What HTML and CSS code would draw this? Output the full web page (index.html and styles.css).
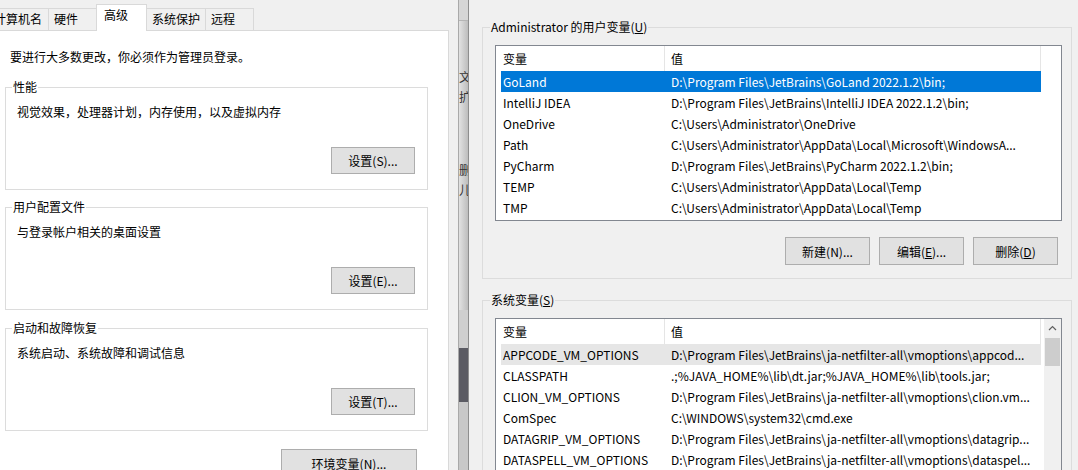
FILE: index.html
```html
<!DOCTYPE html>
<html lang="zh-CN">
<head>
    <meta charset="UTF-8">
    <title>系统属性 - 环境变量</title>
    <link rel="stylesheet" href="styles.css">
</head>
<body>
    <!-- 系统属性：高级 -->
    <div class="sysprop">
        <div class="tabs">
            <div class="tab first">计算机名</div>
            <div class="tab">硬件</div>
            <div class="tab active">高级</div>
            <div class="tab">系统保护</div>
            <div class="tab">远程</div>
        </div>
        <div class="panel">
            <p class="note">要进行大多数更改，你必须作为管理员登录。</p>

            <div class="group">
                <div class="group-title">性能</div>
                <p class="group-text">视觉效果，处理器计划，内存使用，以及虚拟内存</p>
                <button class="btn">设置(S)...</button>
            </div>

            <div class="group">
                <div class="group-title">用户配置文件</div>
                <p class="group-text">与登录帐户相关的桌面设置</p>
                <button class="btn">设置(E)...</button>
            </div>

            <div class="group last">
                <div class="group-title">启动和故障恢复</div>
                <p class="group-text">系统启动、系统故障和调试信息</p>
                <button class="btn">设置(T)...</button>
            </div>

            <button class="btn env-btn">环境变量(N)...</button>
        </div>
    </div>

    <!-- window behind -->
    <div class="strip">
        <div class="strip-top"></div>
        <div class="strip-mid">
            <span class="frag f1">文</span>
            <span class="frag f2">扩</span>
            <span class="frag f3">删</span>
            <span class="frag f2">儿</span>
        </div>
        <div class="strip-light"></div>
        <div class="strip-dark"></div>
        <div class="strip-low"></div>
    </div>

    <!-- 环境变量 -->
    <div class="envvars">
        <div class="group wide">
            <div class="group-title">Administrator 的用户变量(<u>U</u>)</div>
            <div class="list user-list">
                <div class="list-body">
                    <div class="list-head">
                        <div class="col-name">变量</div>
                        <div class="col-value">值</div>
                    </div>
                    <div class="row selected"><div class="col-name">GoLand</div><div class="col-value">D:\Program Files\JetBrains\GoLand 2022.1.2\bin;</div></div>
                    <div class="row"><div class="col-name">IntelliJ IDEA</div><div class="col-value">D:\Program Files\JetBrains\IntelliJ IDEA 2022.1.2\bin;</div></div>
                    <div class="row"><div class="col-name">OneDrive</div><div class="col-value">C:\Users\Administrator\OneDrive</div></div>
                    <div class="row"><div class="col-name">Path</div><div class="col-value">C:\Users\Administrator\AppData\Local\Microsoft\WindowsA...</div></div>
                    <div class="row"><div class="col-name">PyCharm</div><div class="col-value">D:\Program Files\JetBrains\PyCharm 2022.1.2\bin;</div></div>
                    <div class="row"><div class="col-name">TEMP</div><div class="col-value">C:\Users\Administrator\AppData\Local\Temp</div></div>
                    <div class="row"><div class="col-name">TMP</div><div class="col-value">C:\Users\Administrator\AppData\Local\Temp</div></div>
                </div>
            </div>
            <div class="btn-row">
                <button class="btn small">新建(N)...</button>
                <button class="btn small">编辑(<u>E</u>)...</button>
                <button class="btn small">删除(<u>D</u>)</button>
            </div>
        </div>

        <div class="group wide sys-group">
            <div class="group-title">系统变量(<u>S</u>)</div>
            <div class="list sys-list">
                <div class="list-body">
                    <div class="list-head">
                        <div class="col-name">变量</div>
                        <div class="col-value">值</div>
                    </div>
                    <div class="row hot"><div class="col-name">APPCODE_VM_OPTIONS</div><div class="col-value">D:\Program Files\JetBrains\ja-netfilter-all\vmoptions\appcod...</div></div>
                    <div class="row"><div class="col-name">CLASSPATH</div><div class="col-value">.;%JAVA_HOME%\lib\dt.jar;%JAVA_HOME%\lib\tools.jar;</div></div>
                    <div class="row"><div class="col-name">CLION_VM_OPTIONS</div><div class="col-value">D:\Program Files\JetBrains\ja-netfilter-all\vmoptions\clion.vm...</div></div>
                    <div class="row"><div class="col-name">ComSpec</div><div class="col-value">C:\WINDOWS\system32\cmd.exe</div></div>
                    <div class="row"><div class="col-name">DATAGRIP_VM_OPTIONS</div><div class="col-value">D:\Program Files\JetBrains\ja-netfilter-all\vmoptions\datagrip...</div></div>
                    <div class="row"><div class="col-name">DATASPELL_VM_OPTIONS</div><div class="col-value">D:\Program Files\JetBrains\ja-netfilter-all\vmoptions\dataspel...</div></div>
                </div>
                <div class="scrollbar">
                    <div class="sb-arrow">
                        <svg width="9" height="6" viewBox="0 0 9 6"><path d="M1 5 L4.5 1.5 L8 5" fill="none" stroke="#606060" stroke-width="1.2"/></svg>
                    </div>
                    <div class="sb-thumb"></div>
                </div>
            </div>
        </div>
    </div>
</body>
</html>
```

FILE: styles.css
```css
body {
    margin: 0;
    height: 470px;
    overflow: hidden;
    display: flex;
    background-color: #F0F0F0;
    font-family: "Noto Sans CJK SC", sans-serif;
    font-size: 12px;
    line-height: 16px;
    color: #000;
}
p {
    margin: 0;
}
u {
    text-decoration: underline;
    text-underline-offset: 1px;
}

/* left dialog */
.sysprop {
    width: 458px;
    height: 470px;
    flex: none;
    display: flex;
    flex-direction: column;
    overflow: hidden;
}
.tabs {
    height: 30px;
    flex: none;
    display: flex;
    align-items: flex-end;
}
.tab {
    height: 21px;
    line-height: 20px;
    padding: 0 5px;
    min-width: 37px;
    border: 1px solid #D9D9D9;
    border-bottom: none;
    margin-left: -1px;
    background-color: #F0F0F0;
    white-space: nowrap;
}
.tab.first {
    margin-left: -13px;
    padding: 0 6px;
}
.tab.active {
    position: relative;
    z-index: 1;
    height: 26px;
    line-height: 20px;
    padding: 0 7px;
    min-width: 35px;
    margin-bottom: -1px;
    background-color: #fff;
}
.panel {
    width: 428px;
    flex: 1;
    background-color: #fff;
    border-top: 1px solid #D9D9D9;
    border-right: 1px solid #D9D9D9;
    padding: 18px 20px 0 0;
    display: flex;
    flex-direction: column;
}
.note {
    padding-left: 10px;
}
.panel .group {
    margin: 17px 0 0 5px;
}
.panel .group:first-of-type {
    margin-top: 22px;
}
.panel .group.last {
    margin-top: 18px;
}
.group {
    border: 1px solid #DCDCDC;
    padding: 0 12px 15px 11px;
    display: flex;
    flex-direction: column;
}
.group-title {
    width: fit-content;
    margin: -9px 0 0 -5px;
    padding: 0 1px;
    white-space: nowrap;
}
.panel .group-title {
    background-color: #fff;
}
.group-text {
    margin-top: 9px;
}
.btn {
    font-family: inherit;
    font-size: 12px;
    color: #000;
    background-color: #E1E1E1;
    border: 1px solid #ADADAD;
    padding: 0;
    height: 27px;
    width: 84px;
}
.group > .btn {
    align-self: flex-end;
    margin-top: 27px;
}
.env-btn {
    flex: none;
    align-self: flex-end;
    width: 136px;
    height: 28px;
    margin: 18px 11px 0 0;
}

/* strip of the window behind */
.strip {
    width: 9px;
    flex: none;
    margin-right: 1px;
    display: flex;
    flex-direction: column;
    border-left: 1px solid #A9A9A9;
    border-right: 1px solid #8E8E8E;
    background: linear-gradient(to right, #E2E2E2, #BDBDBD);
    overflow: hidden;
}
.strip-top {
    height: 20px;
    background-color: #D6D6D6;
    border-bottom: 1px solid #B5B5B5;
}
.strip-mid {
    height: 289px;
    display: flex;
    flex-direction: column;
}
.frag {
    display: block;
    color: #333;
    margin-top: 4px;
    white-space: nowrap;
}
.frag.f1 {
    margin-top: 48px;
}
.frag.f3 {
    margin-top: 57px;
}
.strip-light {
    height: 38px;
    background-color: #CFCFCF;
}
.strip-dark {
    height: 54px;
    background-color: #5B5B63;
}
.strip-low {
    flex: 1;
    background-color: #C8C8C8;
}

/* right dialog */
.envvars {
    flex: 1;
    padding-top: 27px;
}
.group.wide {
    margin: 0 6px 0 12px;
    padding: 0 9px 13px 12px;
}
.group.wide .group-title {
    background-color: #F0F0F0;
}
.group.sys-group {
    margin-top: 21px;
    padding-bottom: 0;
}
.list {
    margin-top: 10px;
    border: 1px solid #828790;
    background-color: #fff;
    display: flex;
}
.user-list {
    height: 174px;
}
.sys-list {
    height: 200px;
}
.list-body {
    flex: 1;
    min-width: 0;
    padding: 0 20px 0 5px;
}
.sys-list .list-body {
    padding-right: 3px;
}
.list-head {
    height: 25px;
    line-height: 25px;
    display: flex;
    border-right: 1px solid #E5E5E5;
}
.list-head .col-value {
    border-left: 1px solid #E5E5E5;
    padding-left: 6px;
}
.col-name {
    width: 161px;
    flex: none;
    padding-left: 2px;
    white-space: nowrap;
    overflow: hidden;
}
.col-value {
    flex: 1;
    min-width: 0;
    padding-left: 7px;
    white-space: nowrap;
    overflow: hidden;
}
.row {
    height: 21px;
    line-height: 21px;
    display: flex;
}
.row.selected {
    background-color: #0078D7;
    color: #fff;
}
.row.hot {
    background-color: #E6E6E6;
}
.scrollbar {
    width: 17px;
    flex: none;
    background-color: #F0F0F0;
    display: flex;
    flex-direction: column;
    align-items: center;
}
.sb-arrow {
    height: 17px;
    width: 17px;
    display: flex;
    align-items: center;
    justify-content: center;
}
.sb-thumb {
    width: 15px;
    height: 28px;
    margin-top: 2px;
    background-color: #CDCDCD;
}
.btn-row {
    display: flex;
    justify-content: flex-end;
    gap: 9px;
    margin-top: 16px;
    padding-right: 4px;
}
.btn.small {
    width: 85px;
    height: 28px;
}
```
